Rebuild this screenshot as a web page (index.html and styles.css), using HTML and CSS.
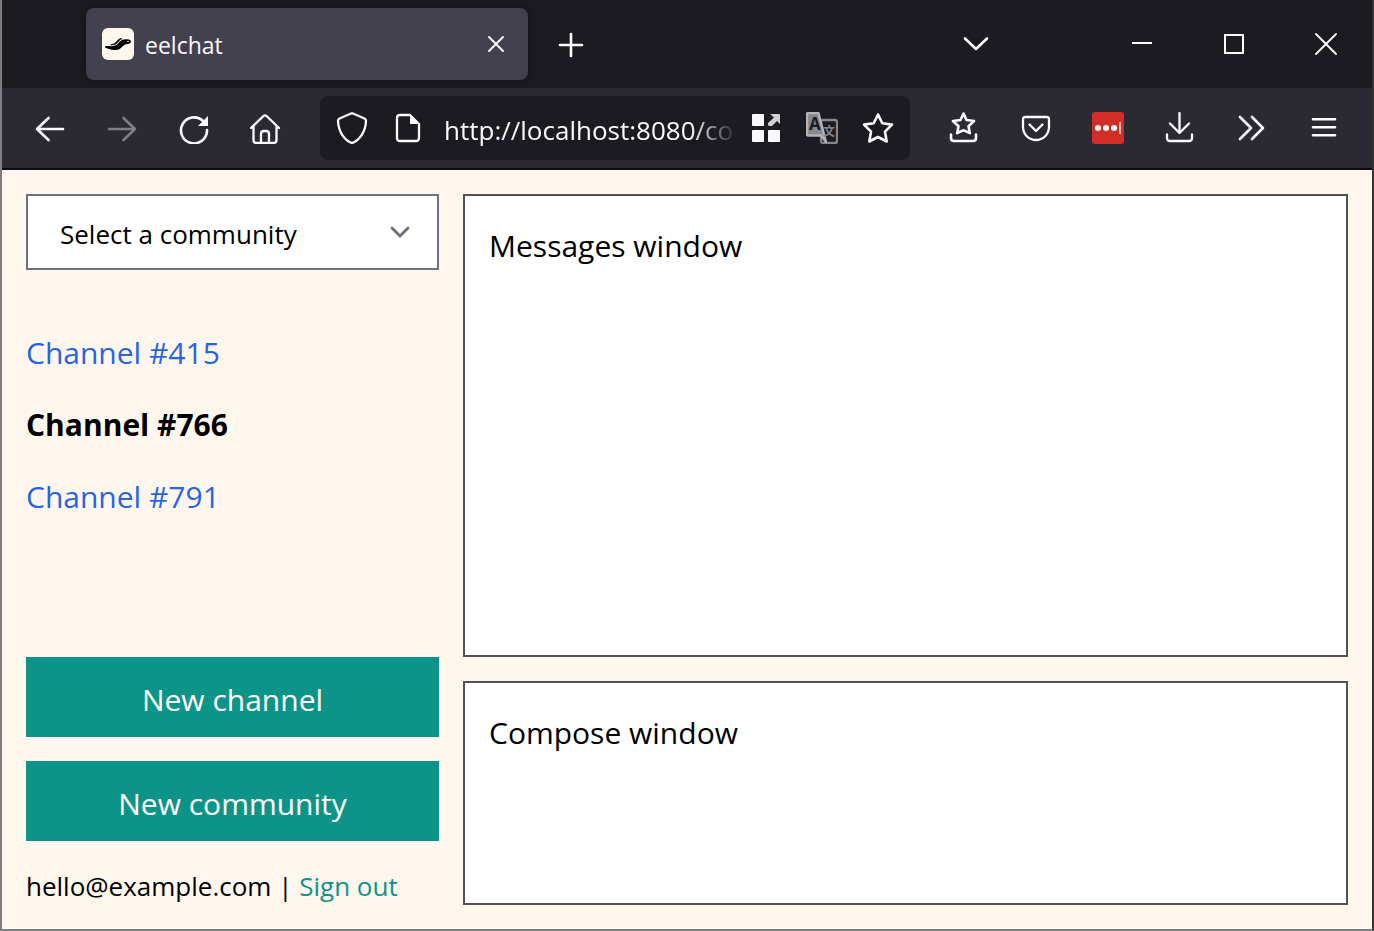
FILE: index.html
```html
<!DOCTYPE html>
<html lang="en">
<head>
<meta charset="utf-8">
<meta name="viewport" content="width=device-width, initial-scale=1">
<title>eelchat</title>
<link rel="stylesheet" href="styles.css">
</head>
<body>
<div class="window">
  <header class="chrome">
    <div class="tab-strip">
      <div class="tab">
        <svg class="icon favicon" viewBox="0 0 32 32" aria-hidden="true">
          <rect width="32" height="32" rx="6" fill="#fff7ed"/>
          <path d="M3 18.300C6 17.800 9 18.400 11.500 18c3.500-.6 4.500-2.500 6-4.200 2-2.200 4.300-2.800 7.500-2.600 3 .1 4.500 1.500 3.800 3-.8 1.800-2.800 1.600-4.800 2.100-2.500.7-3.500 2.700-6 4.400-3.500 2-8 1.500-11 .4-2-.6-4.500-1.300-4-2.800z" fill="#000"/>
          <path d="M9 16.800c3.500 0 5.200-.6 6.700-2.500 1.500-2 2.500-3 4.300-3.800-2 0-3.700 1-5 2.700-1.500 2-2.500 2.600-6 3.600z" fill="#000" stroke="#000" stroke-width=".7"/>
          <circle cx="26" cy="13.500" r=".8" fill="#fff7ed"/>
        </svg>
        <span class="tab-title">eelchat</span>
        <button class="plain tab-close" aria-label="Close tab"><svg class="icon thin" viewBox="0 0 32 32"><path d="M9 9l14 14M23 9L9 23"/></svg></button>
      </div>
      <button class="plain strip-button" aria-label="New tab"><svg class="icon bold" viewBox="0 0 32 32"><path d="M16 6v22M5 17h22"/></svg></button>
      <div class="window-controls">
        <button class="plain strip-button tab-list" aria-label="List all tabs"><svg class="icon bold" viewBox="0 0 32 32"><path d="M5 10.500L16 21l11-10.500"/></svg></button>
        <button class="plain control" aria-label="Minimize"><svg class="icon square" viewBox="0 0 32 32"><path d="M6 15h20"/></svg></button>
        <button class="plain control" aria-label="Maximize"><svg class="icon square" viewBox="0 0 32 32"><path d="M7 7h18v18H7z"/></svg></button>
        <button class="plain control" aria-label="Close window"><svg class="icon thin" viewBox="0 0 32 32"><path d="M6 6l20 20M26 6L6 26"/></svg></button>
      </div>
    </div>
    <nav class="toolbar" aria-label="Browser toolbar">
      <div class="tool-group">
        <button class="plain tool" aria-label="Back"><svg class="icon bold" viewBox="0 0 32 32"><path d="M3 17h26M14.500 6L3 17l11.500 11"/></svg></button>
        <button class="plain tool" aria-label="Forward" disabled><svg class="icon bold" viewBox="0 0 32 32"><path d="M3 17h26M17.500 6L29 17 17.500 28"/></svg></button>
        <button class="plain tool" aria-label="Reload"><svg class="icon bold" viewBox="0 0 32 32"><path d="M29 18A13 13 0 1 1 25 9"/><path class="solid" d="M30 4v10H20z"/></svg></button>
        <button class="plain tool" aria-label="Home"><svg class="icon" viewBox="0 0 32 32"><path d="M1 16L13.500 4q1.500-1.300 3 0L29 16M3.500 14v14q0 3 3 3h17q3 0 3-3V14M11 31V22q0-3 3-3h2q3 0 3 3v9"/></svg></button>
      </div>
      <div class="url-bar">
        <button class="plain url-button" aria-label="Tracking protection"><svg class="icon" viewBox="0 0 32 32"><path d="M17 1.500l11.500 5q1.500.8 1.500 2.500C29.500 19.500 24 28 16 31 8 28 2.500 19.500 2 9q0-1.700 1.500-2.500L15 1.500q1-.5 2 0z"/></svg></button>
        <button class="plain url-button" aria-label="Site information"><svg class="icon" viewBox="0 0 32 32"><path d="M18 3H8Q5 3 5 6v20q0 3 3 3h16q3 0 3-3V12z"/><path class="solid" d="M18 2l10 10H18z"/></svg></button>
        <input class="url-input" type="text" aria-label="Address" value="http://localhost:8080/co">
        <button class="plain url-button" aria-label="Extensions"><svg class="icon solid" viewBox="0 0 32 32"><rect x="2" y="2" width="12" height="12" rx="1"/><rect x="2" y="18" width="12" height="12" rx="1"/><rect x="18" y="18" width="12" height="12" rx="1"/><path fill="#d0d0d0" d="M20 2h9q1 0 1 1v9l-3-3-5 5h-3l-1-1v-2l6-5.500z"/></svg></button>
        <button class="plain url-button" aria-label="Translate page"><svg class="icon" viewBox="0 0 32 32"><rect x="15" y="8" width="16" height="23" rx="2" stroke="#85858a"/><path d="M1 2q0-1 1-1h10.500L20 30l-5-6.500H2q-1 0-1-1z" fill="#8a8a8e" stroke="#b4b4b6"/><text class="letter-a" x="3" y="18">A</text><text class="letter-b" x="17" y="24">文</text></svg></button>
        <button class="plain url-button" aria-label="Bookmark"><svg class="icon bold" viewBox="0 0 32 32"><path d="M16 2.500l4.300 8.800 9.700 1.300-7 7 1.700 9.900-8.700-4.500-8.700 4.500 1.700-9.900-7-7 9.700-1.300z"/></svg></button>
      </div>
      <div class="tool-group">
        <button class="plain tool" aria-label="Bookmarks"><svg class="icon bold" viewBox="0 0 32 32"><path d="M15.500 1.500l3 6.500 7.500 1-5.500 5.200 1.300 7-6.300-3-6.300 3 1.300-7L5 9l7.500-1zM3 22.500V26q0 3 3 3h19q3 0 3-3v-3.500"/></svg></button>
        <button class="plain tool" aria-label="Save to Pocket"><svg class="icon" viewBox="0 0 32 32"><path d="M5.500 5h21Q29 5 29 7.500V15a13 13 0 0 1-26 0V7.500Q3 5 5.500 5zM9.500 12.500L16 19l6.500-6.500"/></svg></button>
        <button class="plain tool" aria-label="Password manager"><svg class="icon solid" viewBox="0 0 32 32"><rect width="32" height="32" rx="3" fill="#d32d27"/><circle cx="6" cy="16" r="3"/><circle cx="14" cy="16" r="3"/><circle cx="22" cy="16" r="3"/><rect x="27" y="10" width="2" height="12" fill="#f3b7b4"/></svg></button>
        <button class="plain tool" aria-label="Downloads"><svg class="icon" viewBox="0 0 32 32"><path d="M15.500 1v20M6 11.500l9.500 9.500 9.500-9.500M3 22.500V26q0 3 3 3h19q3 0 3-3v-3.500"/></svg></button>
        <button class="plain tool" aria-label="More tools"><svg class="icon bold" viewBox="0 0 32 32"><path d="M4 5l11 11L4 27M16 5l11 11-11 11"/></svg></button>
        <button class="plain tool" aria-label="Menu"><svg class="icon bold" viewBox="0 0 32 32"><path d="M5 7.300h22M5 15.300h22M5 23.300h22"/></svg></button>
      </div>
    </nav>
  </header>
  <div class="app">
    <aside class="sidebar">
      <div class="select-box">
        <select class="community" aria-label="Community"><option>Select a community</option></select>
        <svg class="caret" viewBox="0 0 24 24" aria-hidden="true"><path d="M4 8l8 8 8-8"/></svg>
      </div>
      <nav class="channels" aria-label="Channels">
        <a class="link" href="#415">Channel #415</a>
        <span class="current" aria-current="page">Channel #766</span>
        <a class="link" href="#791">Channel #791</a>
      </nav>
      <div class="actions">
        <button class="action">New channel</button>
        <button class="action">New community</button>
      </div>
      <div class="account">hello@example.com | <a class="sign-out" href="#signout">Sign out</a></div>
    </aside>
    <main class="content">
      <section class="panel">Messages window</section>
      <section class="panel compose">Compose window</section>
    </main>
  </div>
</div>
</body>
</html>
```
FILE: styles.css
```css
* {
  box-sizing: border-box;
}

body {
  margin: 0;
  font-family: "Open Sans", "Noto Sans", sans-serif;
  font-size: 30px;
  line-height: 48px;
  color: #000;
}

.window {
  display: flex;
  flex-direction: column;
  min-height: 100vh;
  border: 2px solid #7f7f7f;
  border-top: 0;
  border-right-color: #333;
  background: #fff7ed;
}

.plain {
  display: flex;
  align-items: center;
  justify-content: center;
  flex: none;
  padding: 0;
  border: 0;
  background: none;
  color: #fbfbfe;
}

.plain:disabled {
  opacity: 0.4;
}

.icon {
  display: block;
  flex: none;
  width: 32px;
  height: 32px;
  fill: none;
  stroke: currentColor;
  stroke-width: 2.3;
  stroke-linecap: round;
  stroke-linejoin: round;
}

.icon.bold {
  stroke-width: 2.6;
}

.icon.thin {
  stroke-width: 1.9;
}

.icon.square {
  stroke-width: 2;
  stroke-linecap: butt;
  stroke-linejoin: miter;
}

.solid,
.icon.solid {
  fill: currentColor;
  stroke: none;
}

.icon.favicon {
  stroke: none;
}

.chrome {
  border-bottom: 2px solid #0c0c0d;
  background: #2b2a33;
}

.tab-strip {
  display: flex;
  align-items: center;
  height: 88px;
  padding-left: 84px;
  background: #1c1b22;
}

.tab {
  display: flex;
  align-items: center;
  flex: 0 1 442px;
  height: 72px;
  padding: 0 16px;
  border-radius: 8px;
  background: #42414d;
  box-shadow: 0 0 6px rgba(0, 0, 0, 0.5);
}

.tab-title {
  flex: 1;
  margin-left: 11px;
  padding-top: 2px;
  font-size: 23px;
  color: #fbfbfe;
}

.strip-button {
  width: 60px;
  height: 60px;
  margin-left: 13px;
}

.window-controls {
  display: flex;
  align-items: center;
  margin-left: auto;
}

.tab-list {
  margin-right: 90px;
}

.control {
  width: 92px;
  height: 88px;
}

.toolbar {
  display: flex;
  align-items: center;
  gap: 22px;
  height: 80px;
  padding: 0 16px;
}

.tool-group {
  display: flex;
  gap: 8px;
}

.tool {
  width: 64px;
  height: 64px;
}

.url-bar {
  display: flex;
  align-items: center;
  flex: 1;
  min-width: 0;
  height: 64px;
  padding: 0 4px;
  border-radius: 8px;
  background: #1c1b22;
}

.url-button {
  width: 56px;
  height: 64px;
}

.url-input {
  flex: 1;
  min-width: 0;
  height: 64px;
  margin-left: 8px;
  padding: 4px 0 0;
  border: 0;
  background: none;
  font-family: inherit;
  font-size: 26px;
  color: #fbfbfe;
  -webkit-mask-image: linear-gradient(to left, transparent, #000 48px);
  mask-image: linear-gradient(to left, transparent, #000 48px);
}

.letter-a,
.letter-b {
  stroke: none;
  font-family: "Open Sans", sans-serif;
  font-size: 17px;
  font-weight: 700;
  fill: #1c1b22;
}

.letter-b {
  font-family: "Noto Sans CJK SC", sans-serif;
  font-size: 12px;
  fill: #85858a;
}

.app {
  display: grid;
  grid-template-columns: 7fr 15fr;
  gap: 24px;
  flex: 1;
  padding: 24px;
}

.sidebar {
  display: flex;
  flex-direction: column;
  min-width: 0;
}

.select-box {
  position: relative;
}

.community {
  display: block;
  width: 100%;
  height: 76px;
  padding: 4px 64px 0 32px;
  border: 2px solid #6b7280;
  border-radius: 0;
  background: #fff;
  appearance: none;
  font-family: inherit;
  font-size: 26px;
  color: #000;
}

.caret {
  position: absolute;
  top: 26px;
  right: 27px;
  width: 24px;
  height: 24px;
  fill: none;
  stroke: #6b7280;
  stroke-width: 3;
  stroke-linecap: round;
  stroke-linejoin: round;
  pointer-events: none;
}

.channels {
  display: flex;
  flex-direction: column;
  gap: 24px;
  flex: 1;
  margin-top: 59px;
}

.link {
  color: #2563eb;
  text-decoration: none;
}

.current {
  font-weight: 700;
}

.actions {
  display: flex;
  flex-direction: column;
  gap: 24px;
}

.action {
  height: 80px;
  padding: 4px 0 0;
  border: 0;
  background: #0d9488;
  font-family: inherit;
  font-size: 30px;
  color: #fff;
}

.account {
  margin-top: 26px;
  font-size: 26px;
  line-height: 38px;
  white-space: nowrap;
}

.sign-out {
  color: #0d9488;
  text-decoration: none;
}

.content {
  display: flex;
  flex-direction: column;
  gap: 24px;
  min-width: 0;
}

.panel {
  flex: 1;
  padding: 26px 24px 24px;
  border: 2px solid #525252;
  background: #fff;
}

.compose {
  flex: 0 0 224px;
}
```
